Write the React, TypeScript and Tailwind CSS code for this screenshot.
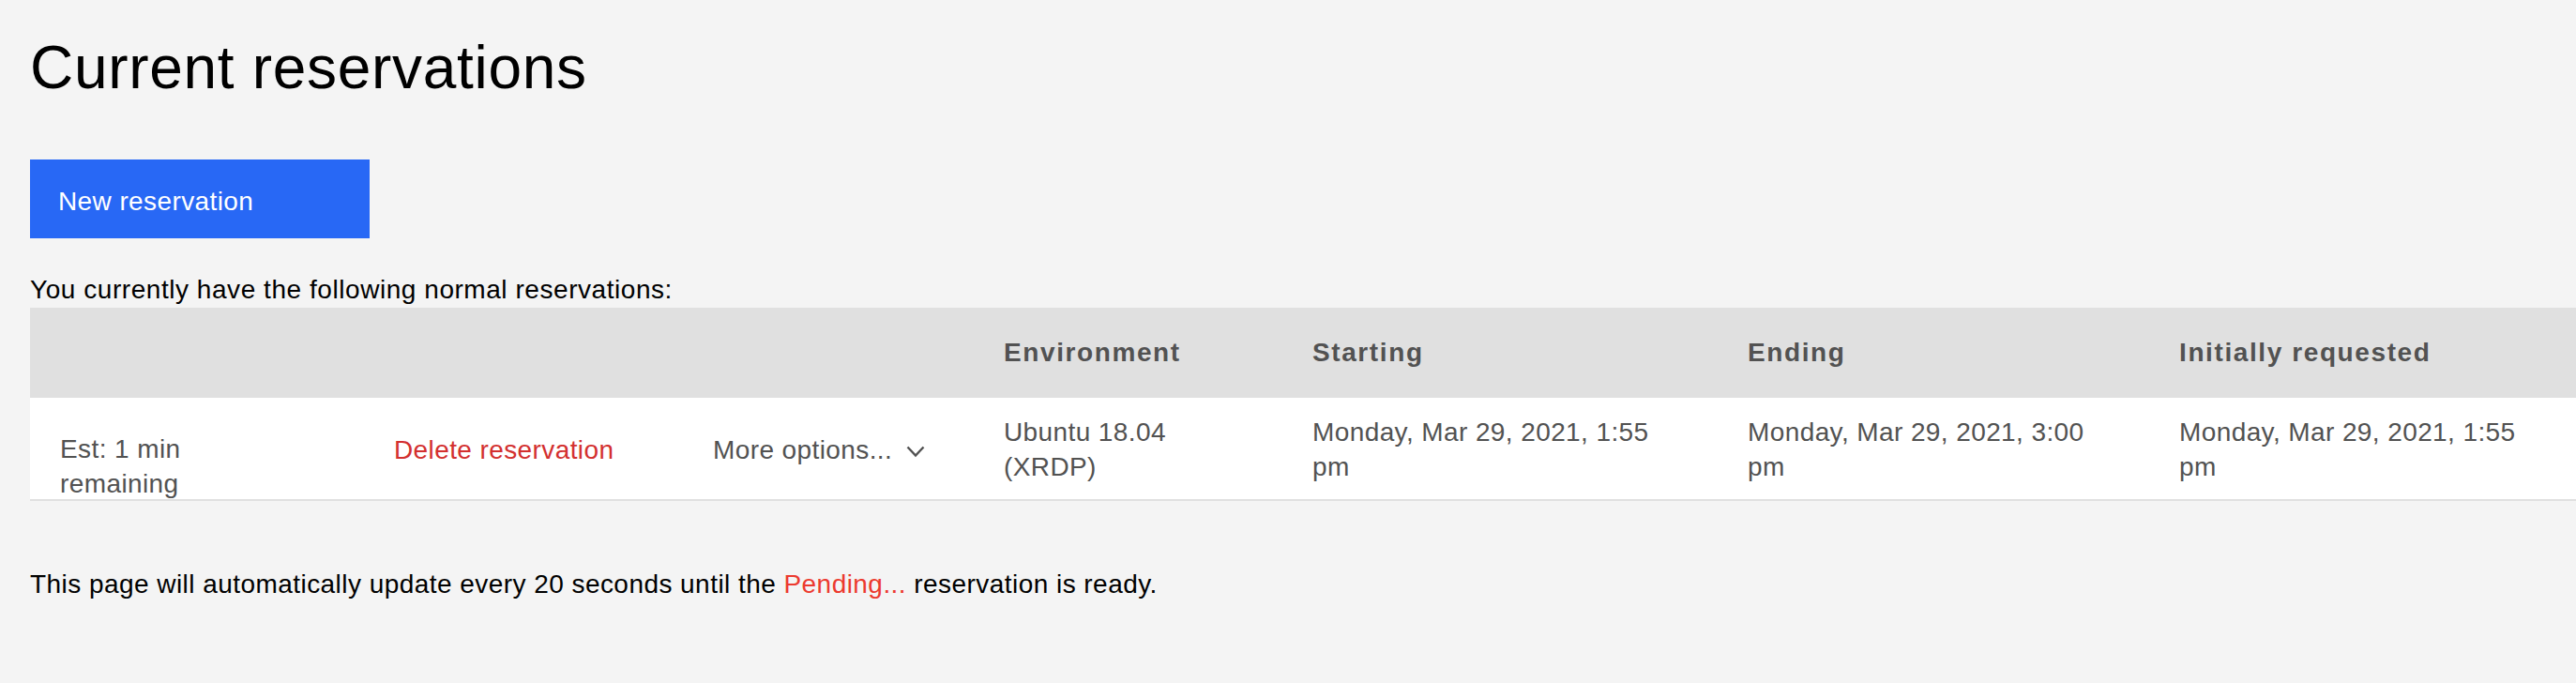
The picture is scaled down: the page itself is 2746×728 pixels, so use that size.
const cols = 'grid grid-cols-[356px_340px_310px_329px_464px_460px_1fr]';

const headers = ['', '', '', 'Environment', 'Starting', 'Ending', 'Initially requested'];

const Chevron = () => (
  <svg width="20" height="13" viewBox="0 0 20 13" fill="none" className="ml-[15px] mt-[4px] shrink-0">
    <path d="M1.5 1.5 L10 10.5 L18.5 1.5" stroke="#525252" strokeWidth="2.4" />
  </svg>
);

export default function App() {
  return (
    <div className="min-h-screen w-full overflow-hidden bg-[#f4f4f4] pl-8 pt-8 font-['Liberation_Sans',Arial,sans-serif] text-black">
      <h1 className="text-[64px] font-normal leading-[80px] tracking-[0.7px]">Current reservations</h1>

      <button className="mt-[58px] flex h-[84px] w-[362px] items-center bg-[#2868f5] pl-[30px] pt-[5px] text-[28px] tracking-[0.4px] text-white">
        New reservation
      </button>

      <p className="mt-[37px] text-[28px] leading-[36px] tracking-[0.55px]">
        You currently have the following normal reservations:
      </p>

      {/* Table */}
      <div className="mt-px">
        <div className={`${cols} h-[96px] items-center bg-[#e0e0e0]`}>
          {headers.map((h, i) => (
            <div key={i} className="px-8 text-[28px] font-bold tracking-[1.6px] text-[#525252]">
              {h}
            </div>
          ))}
        </div>

        <div className={`${cols} h-[110px] items-center border-b-2 border-[#e0e0e0] bg-white text-[28px] leading-[37px] tracking-[0.4px] text-[#525252]`}>
          <div className="mt-[36px] px-8">
            <span className="block">Est: 1 min</span>
            <span className="block">remaining</span>
          </div>
          <div className="px-8 text-[#d3302f]">Delete reservation</div>
          <div className="flex items-center px-8">
            More options...
            <Chevron />
          </div>
          <div className="px-8">Ubuntu 18.04 (XRDP)</div>
          <div className="px-8">Monday, Mar 29, 2021, 1:55 pm</div>
          <div className="px-8">Monday, Mar 29, 2021, 3:00 pm</div>
          <div className="px-8">Monday, Mar 29, 2021, 1:55 pm</div>
        </div>
      </div>

      <p className="mt-[71px] text-[28px] leading-[36px] tracking-[0.45px]">
        This page will automatically update every 20 seconds until the{' '}
        <span className="text-[#ec3a2f]">Pending...</span> reservation is ready.
      </p>
    </div>
  );
}
